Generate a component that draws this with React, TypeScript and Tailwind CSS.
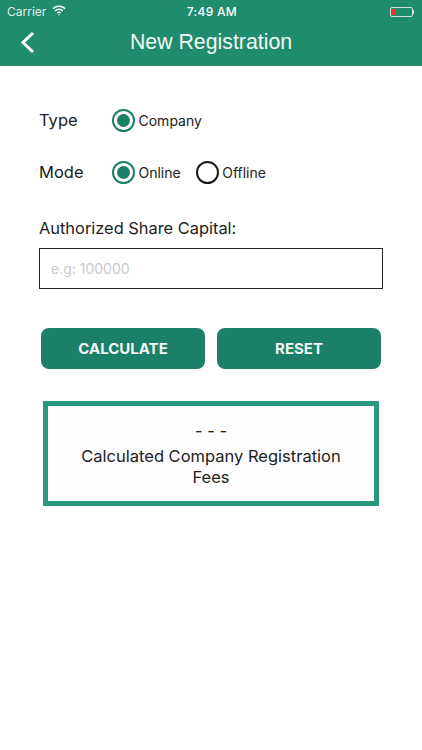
const sans = 'font-["Inter",sans-serif]'

const Radio = ({ label, checked }: { label: string; checked?: boolean }) => (
  <div className="flex items-center">
    <span
      className={`flex h-[23px] w-[23px] items-center justify-center rounded-full border-[2.5px] ${
        checked ? 'border-[#1c7f68]' : 'border-[#1a1a1a]'
      }`}
    >
      {checked && <span className="h-[13px] w-[13px] rounded-full bg-[#1c7f68]" />}
    </span>
    <span className="ml-[3.5px] text-[14px] text-[#222]">{label}</span>
  </div>
)

const StatusBar = () => (
  <div className="relative flex h-[22px] items-center px-[7px] pt-[1px] text-white">
    <span className="text-[12px] text-[#e3efea]">Carrier</span>
    <svg className="ml-[6px] -mt-[2px]" width="14" height="11" viewBox="0 0 14 11" fill="none" stroke="#fff" strokeWidth="1.5">
      <path d="M1 3.6C4.4.6 9.6.6 13 3.6" />
      <path d="M3.2 5.9c2.2-1.9 5.4-1.9 7.6 0" />
      <path d="M5.3 8c1-.8 2.4-.8 3.4 0" />
      <circle cx="7" cy="9.7" r=".7" fill="#fff" stroke="none" />
    </svg>
    <span className="absolute left-[2px] right-0 text-center text-[12px] font-medium tracking-[0.3px]">7:49 AM</span>
    <div className="ml-auto mr-[1px] flex items-center">
      <div className="h-[10px] w-[23px] rounded-[2px] border border-[#cfe3dc] p-[1px]">
        <div className="h-full w-[4px] bg-[#f0352d]" />
      </div>
      <div className="h-[4px] w-[1.5px] bg-[#cfe3dc]" />
    </div>
  </div>
)

const App = () => (
  <div className={`h-[750px] w-[422px] overflow-hidden bg-white ${sans}`}>
    <header className="h-[66px] bg-[#218b6e]">
      <StatusBar />
      <div className="relative flex h-[44px] items-center justify-center">
        <svg className="absolute left-[20px] top-[9px]" width="15" height="23" viewBox="0 0 15 23" fill="none" stroke="#fff" strokeWidth="3">
          <path d="M13 2 3 11.5 13 21" />
        </svg>
        <h1 className='pb-[2px] font-["Liberation_Sans",sans-serif] text-[21.3px] text-[#f1f7f5]'>New Registration</h1>
      </div>
    </header>

    <main className="px-[39px]">
      <div className="mt-[43px] flex h-[23px] items-center">
        <span className="w-[73px] text-[16.5px] text-[#222]">Type</span>
        <Radio label="Company" checked />
      </div>
      <div className="mt-[29px] flex h-[23px] items-center">
        <span className="w-[73px] text-[16.5px] text-[#222]">Mode</span>
        <Radio label="Online" checked />
        <div className="ml-[15px]">
          <Radio label="Offline" />
        </div>
      </div>

      <p className="mt-[32px] text-[16.4px] leading-[24px] text-[#222]">Authorized Share Capital:</p>
      <div className="mt-[8px] flex h-[41px] w-[344px] items-center border border-[#222] px-[11px]">
        <span className="text-[14px] text-[#c8c8cc]">e.g: 100000</span>
      </div>

      <div className="ml-[2px] mt-[39px] flex w-[340px] gap-[12px]">
        <button type="button" className="h-[41px] w-[164px] rounded-[8px] bg-[#1c7f68] pt-[1px] text-[15px] font-bold text-[#f1f7f5]">
          CALCULATE
        </button>
        <button type="button" className="h-[41px] w-[164px] rounded-[8px] bg-[#1c7f68] pt-[1px] text-[15px] font-bold text-[#f1f7f5]">
          RESET
        </button>
      </div>

      <div className="ml-[4px] mt-[32px] flex h-[105px] w-[336px] flex-col items-center justify-center border-[5px] border-[#2a977f] bg-[#fdfdfd] pt-[2px] text-center text-[16.5px] leading-[21px] text-[#222]">
        <p>- - -</p>
        <p className="mt-[4px] w-[290px]">Calculated Company Registration Fees</p>
      </div>
    </main>
  </div>
)

export default App
